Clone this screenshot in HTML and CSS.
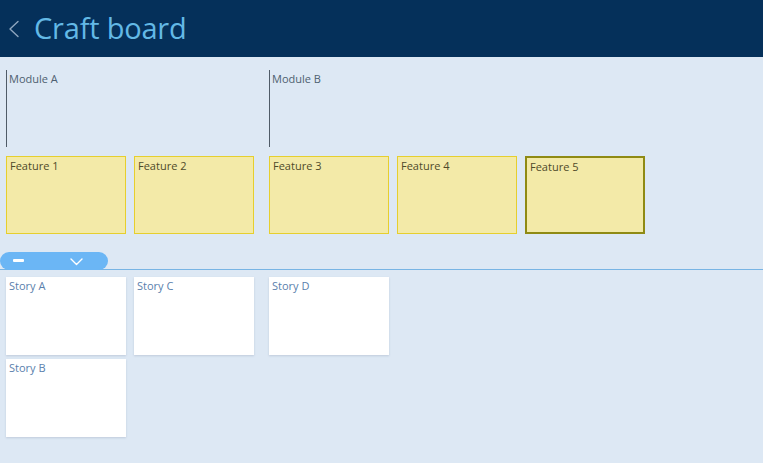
FILE: index.html
```html
<!DOCTYPE html>
<html lang="en">
<head>
<meta charset="utf-8">
<title>Craft board</title>
<link rel="stylesheet" href="styles.css">
</head>
<body>
<header class="topbar">
  <svg class="back" width="12" height="18" viewBox="0 0 12 18"><path d="M10 1.5 L2 9 L10 16.5" fill="none" stroke="#8fa6bf" stroke-width="1.4" stroke-linecap="round" stroke-linejoin="round"/></svg>
  <h1 class="title">Craft board</h1>
</header>
<main class="board">
  <div class="row modules">
    <div class="group group-2"><div class="module">Module A</div></div>
    <div class="group group-3"><div class="module">Module B</div></div>
  </div>
  <div class="row features">
    <div class="group group-2">
      <div class="card feature">Feature 1</div>
      <div class="card feature">Feature 2</div>
    </div>
    <div class="group group-3">
      <div class="card feature">Feature 3</div>
      <div class="card feature">Feature 4</div>
      <div class="card feature selected">Feature 5</div>
    </div>
  </div>
  <div class="release">
    <div class="pill">
      <span class="minus"></span>
      <svg class="caret" width="13" height="8" viewBox="0 0 13 8"><path d="M1 1 L6.5 6.5 L12 1" fill="none" stroke="#ffffff" stroke-width="1.4" stroke-linecap="round" stroke-linejoin="round"/></svg>
    </div>
  </div>
  <div class="row stories">
    <div class="group group-2">
      <div class="col">
        <div class="card story">Story A</div>
        <div class="card story">Story B</div>
      </div>
      <div class="col">
        <div class="card story">Story C</div>
      </div>
    </div>
    <div class="group group-3">
      <div class="col">
        <div class="card story">Story D</div>
      </div>
    </div>
  </div>
</main>
</body>
</html>
```
FILE: styles.css
```css
* { box-sizing: border-box; }
html, body { margin: 0; padding: 0; }
body {
  width: 763px;
  height: 463px;
  overflow: hidden;
  background: #dde8f4;
  font-family: "Open Sans", "Noto Sans", sans-serif;
}
.topbar {
  height: 57px;
  background: #05305a;
  display: flex;
  align-items: center;
  padding-left: 8px;
}
.title {
  margin: 0 0 0 14px;
  font-family: "Open Sans", sans-serif;
  font-weight: 400;
  font-size: 29px;
  letter-spacing: -0.2px;
  color: #63b9e6;
  line-height: 1;
  padding-bottom: 2px;
}
.board { padding-left: 6px; }
.row { display: flex; gap: 15px; }
.group { display: flex; gap: 8px; }
.group-2 { width: 248px; }
.group-3 { width: 376px; }
.modules { margin-top: 13px; height: 77px; }
.module {
  flex: 1;
  border-left: 1px solid #4f5b67;
  font-size: 11px;
  color: #4e5f70;
  padding: 2px 0 0 2px;
  line-height: 14px;
}
.features { margin-top: 9px; }
.card {
  width: 120px;
  height: 78px;
  font-size: 11px;
  line-height: 14px;
}
.feature {
  background: #f3eaa8;
  border: 1px solid #e6cf2e;
  color: #4f4a2a;
  padding: 2px 3px;
}
.feature.selected {
  border: 2px solid #8f8a14;
  padding: 2px 3px;
}
.release {
  margin-top: 18px;
  margin-left: -6px;
  height: 18px;
  border-bottom: 1px solid #78b4e4;
}
.pill {
  width: 108px;
  height: 18px;
  background: #6bb6f5;
  border-radius: 9px;
  display: flex;
  align-items: center;
  padding-left: 13px;
}
.minus {
  width: 11px;
  height: 3px;
  background: #ffffff;
  border-radius: 1px;
  margin-top: -1px;
}
.caret { margin-left: 46px; margin-top: 2px; }
.stories { margin-top: 7px; }
.col { display: flex; flex-direction: column; gap: 4px; }
.story {
  background: #ffffff;
  color: #5a7fad;
  padding: 2px 3px;
  box-shadow: 0 1px 2px rgba(60, 80, 110, 0.18);
}
```
